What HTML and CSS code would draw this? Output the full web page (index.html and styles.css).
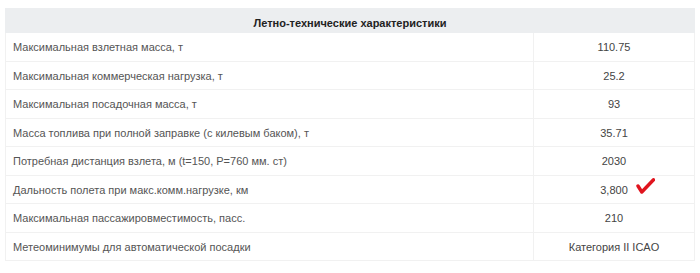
FILE: index.html
```html
<!DOCTYPE html>
<html lang="ru">
<head>
<meta charset="utf-8">
<link rel="stylesheet" href="styles.css">
</head>
<body>
<table class="specs">
  <thead>
    <tr><th colspan="2">Летно-технические характеристики</th></tr>
  </thead>
  <tbody>
    <tr><td class="name">Максимальная взлетная масса, т</td><td class="val">110.75</td></tr>
    <tr><td class="name">Максимальная коммерческая нагрузка, т</td><td class="val">25.2</td></tr>
    <tr><td class="name">Максимальная посадочная масса, т</td><td class="val">93</td></tr>
    <tr><td class="name">Масса топлива при полной заправке (с килевым баком), т</td><td class="val">35.71</td></tr>
    <tr><td class="name">Потребная дистанция взлета, м (t=150, P=760 мм. ст)</td><td class="val">2030</td></tr>
    <tr><td class="name">Дальность полета при макс.комм.нагрузке, км</td><td class="val"><span class="marked">3,800<svg class="check" width="19" height="16" viewBox="0 0 19 16"><path d="M2 8 L5.8 14 L17.5 1.8" fill="none" stroke="#e0141e" stroke-width="3.4" stroke-linecap="round" stroke-linejoin="round"/></svg></span></td></tr>
    <tr><td class="name">Максимальная пассажировместимость, пасс.</td><td class="val">210</td></tr>
    <tr><td class="name">Метеоминимумы для автоматической посадки</td><td class="val">Категория II ICAO</td></tr>
  </tbody>
</table>
</body>
</html>
```

FILE: styles.css
```css
body {
  margin: 8px 5px;
  background: #fff;
  font-family: "Liberation Sans", Arial, sans-serif;
}
.specs {
  width: 690px;
  border-collapse: collapse;
  font-size: 11px;
  color: #555;
}
.specs th {
  background: #eceef0;
  color: #222;
  font-weight: bold;
  height: 24px;
  padding: 0 4px;
  vertical-align: bottom;
  padding-bottom: 3px;
  box-sizing: border-box;
  text-align: center;
  border: 1px solid #eceef0;
}
.specs td {
  height: 28px;
  padding: 0 7px;
  border: 1px solid #f1f1f1;
  box-sizing: border-box;
}
.specs tbody tr:nth-child(odd) td { height: 29px; }
.specs .name { width: 528px; }
.specs .val { text-align: center; color: #444; }
.marked { position: relative; }
.check {
  position: absolute;
  left: 36px;
  top: -6px;
}
```
